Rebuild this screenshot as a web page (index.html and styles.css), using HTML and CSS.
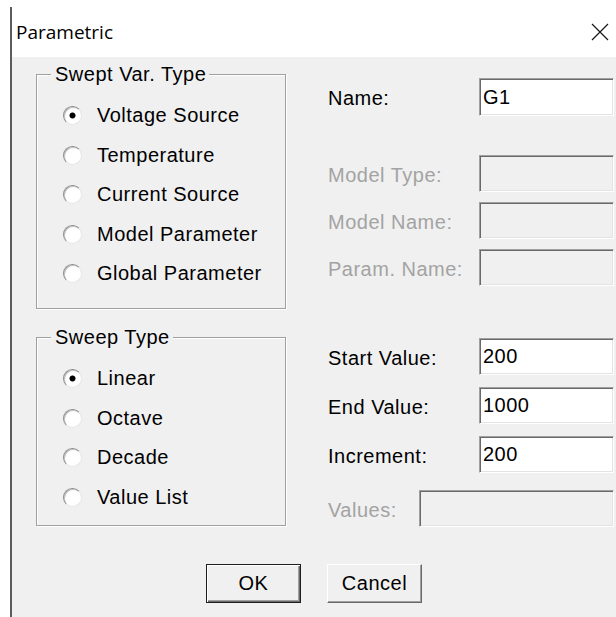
FILE: index.html
```html
<!DOCTYPE html>
<html lang="en">
<head>
<meta charset="utf-8">
<title>Parametric</title>
<link rel="stylesheet" href="styles.css">
</head>
<body>
<div class="window">
  <header class="titlebar">
    <span class="title">Parametric</span>
    <button class="close" type="button" aria-label="Close">
      <svg width="18" height="18" viewBox="0 0 18 18"><path d="M1 1 L17 17 M17 1 L1 17" stroke="#1a1a1a" stroke-width="1.2" fill="none"/></svg>
    </button>
  </header>

  <div class="dialog">
    <div class="columns">
      <div class="col-left">
        <div class="group group-swept">
          <div class="group-title">Swept Var. Type</div>
          <div class="options">
            <label class="option"><span class="radio checked"></span>Voltage Source</label>
            <label class="option"><span class="radio"></span>Temperature</label>
            <label class="option"><span class="radio"></span>Current Source</label>
            <label class="option"><span class="radio"></span>Model Parameter</label>
            <label class="option"><span class="radio"></span>Global Parameter</label>
          </div>
        </div>

        <div class="group group-sweep">
          <div class="group-title">Sweep Type</div>
          <div class="options">
            <label class="option"><span class="radio checked"></span>Linear</label>
            <label class="option"><span class="radio"></span>Octave</label>
            <label class="option"><span class="radio"></span>Decade</label>
            <label class="option"><span class="radio"></span>Value List</label>
          </div>
        </div>
      </div>

      <div class="col-right">
        <div class="section section-name">
          <div class="row row-tall"><span class="label">Name:</span><input class="field" size="1" value="G1"></div>
        </div>
        <div class="section section-model">
          <div class="row"><span class="label disabled">Model Type:</span><input class="field" size="1" disabled></div>
          <div class="row"><span class="label disabled">Model Name:</span><input class="field" size="1" disabled></div>
          <div class="row"><span class="label disabled">Param. Name:</span><input class="field" size="1" disabled></div>
        </div>
        <div class="section section-range">
          <div class="row"><span class="label">Start Value:</span><input class="field" size="1" value="200"></div>
          <div class="row"><span class="label">End Value:</span><input class="field" size="1" value="1000"></div>
          <div class="row"><span class="label">Increment:</span><input class="field" size="1" value="200"></div>
        </div>
        <div class="section section-values">
          <div class="row"><span class="label label-short disabled">Values:</span><input class="field" size="1" disabled></div>
        </div>
      </div>
    </div>

    <div class="actions">
      <button class="btn btn-default" type="button">OK</button>
      <button class="btn" type="button">Cancel</button>
    </div>
  </div>
</div>
</body>
</html>
```

FILE: styles.css
```css
* {
  box-sizing: border-box;
}

html,
body {
  margin: 0;
  background: #ffffff;
}

body {
  padding-top: 7px;
  font-family: "Liberation Sans", Arial, sans-serif;
  font-size: 20px;
  letter-spacing: 0.5px;
  color: #000;
  overflow: hidden;
}

/* Window frame: only the left edge shows */
.window {
  margin-left: 10px;
  border-left: 2px solid #5c5c5c;
  display: flex;
  flex-direction: column;
  height: 610px;
}

.titlebar {
  height: 50px;
  flex: none;
  display: flex;
  align-items: center;
  justify-content: space-between;
  padding-left: 4px;
  background: #fff;
}

.title {
  font-family: "Open Sans", "Noto Sans", sans-serif;
  font-size: 19px;
  letter-spacing: 0;
  color: #000;
}

.close {
  border: 0;
  background: transparent;
  padding: 0;
  margin-right: 7px;
  width: 18px;
  height: 18px;
  display: flex;
}

/* Dialog client area */
.dialog {
  flex: 1;
  background: #f0f0f0;
  display: flex;
  flex-direction: column;
  padding-left: 24px;
}

.columns {
  display: flex;
  align-items: flex-start;
  gap: 42px;
}

.col-left {
  width: 250px;
  flex: none;
  padding-top: 17px;
}

/* Etched group box */
.group {
  border: 1px solid #a0a0a0;
  box-shadow: inset 1px 1px 0 #fff, 1px 1px 0 #fff;
}

.group-swept {
  height: 235px;
}

.group-sweep {
  margin-top: 28px;
  height: 189px;
}

.group-title {
  width: fit-content;
  margin: -12px 0 0 14px;
  padding: 0 3px 0 4px;
  line-height: 22px;
  background: #f0f0f0;
}

.options {
  display: flex;
  flex-direction: column;
  padding: 11px 0 0 26px;
}

.option {
  height: 39.5px;
  display: flex;
  align-items: center;
}

/* Classic sunken radio button */
.radio {
  width: 19px;
  height: 19px;
  flex: none;
  margin-right: 15px;
  border-radius: 50%;
  border: 1.5px solid;
  border-color: #8c8c8c #e6e6e6 #e6e6e6 #8c8c8c;
  box-shadow: inset 1px 1px 0 #c4c4c4;
  background: #fff;
}

.radio.checked {
  background: radial-gradient(circle, #000 0 2.6px, #fff 3.4px);
}

/* Right-hand fields */
.col-right {
  width: 286px;
  flex: none;
  min-width: 0;
  display: flex;
  flex-direction: column;
}

.section {
  display: flex;
  flex-direction: column;
}

.section-name {
  margin-top: 21px;
}

.section-model {
  margin-top: 39px;
  gap: 10px;
}

.section-range {
  margin-top: 52px;
  gap: 12px;
}

.section-values {
  margin-top: 17px;
}

.row {
  display: flex;
  align-items: center;
  height: 37px;
}

.row-tall {
  height: 38px;
}

.label {
  width: 151px;
  flex: none;
  padding-top: 3px;
  white-space: nowrap;
}

.label-short {
  width: 91px;
}

.label.disabled {
  color: #a3a3a3;
}

.field {
  flex: 1;
  width: 0;
  min-width: 0;
  height: 100%;
  margin: 0;
  padding: 0 3px;
  font: inherit;
  letter-spacing: inherit;
  color: #000;
  background: #fff;
  border: 1px solid;
  border-color: #a0a0a0 #fff #fff #a0a0a0;
  box-shadow: inset 1px 1px 0 #696969, inset -1px -1px 0 #e3e3e3;
  outline: none;
}

.field:disabled {
  background: #f0f0f0;
}

/* Push buttons */
.actions {
  display: flex;
  justify-content: center;
  gap: 26px;
  margin-top: 37px;
  padding-right: 24px;
}

.btn {
  width: 95px;
  height: 39px;
  padding: 0;
  font: inherit;
  letter-spacing: inherit;
  color: #000;
  background: #f0f0f0;
  border: 1px solid;
  border-color: #fff #696969 #696969 #fff;
  box-shadow: inset -1px -1px 0 #a0a0a0;
}

.btn-default {
  border: 1px solid #1e1e1e;
  box-shadow: inset 1px 1px 0 #fff, inset -1px -1px 0 #696969, inset -2px -2px 0 #a0a0a0;
}
```
